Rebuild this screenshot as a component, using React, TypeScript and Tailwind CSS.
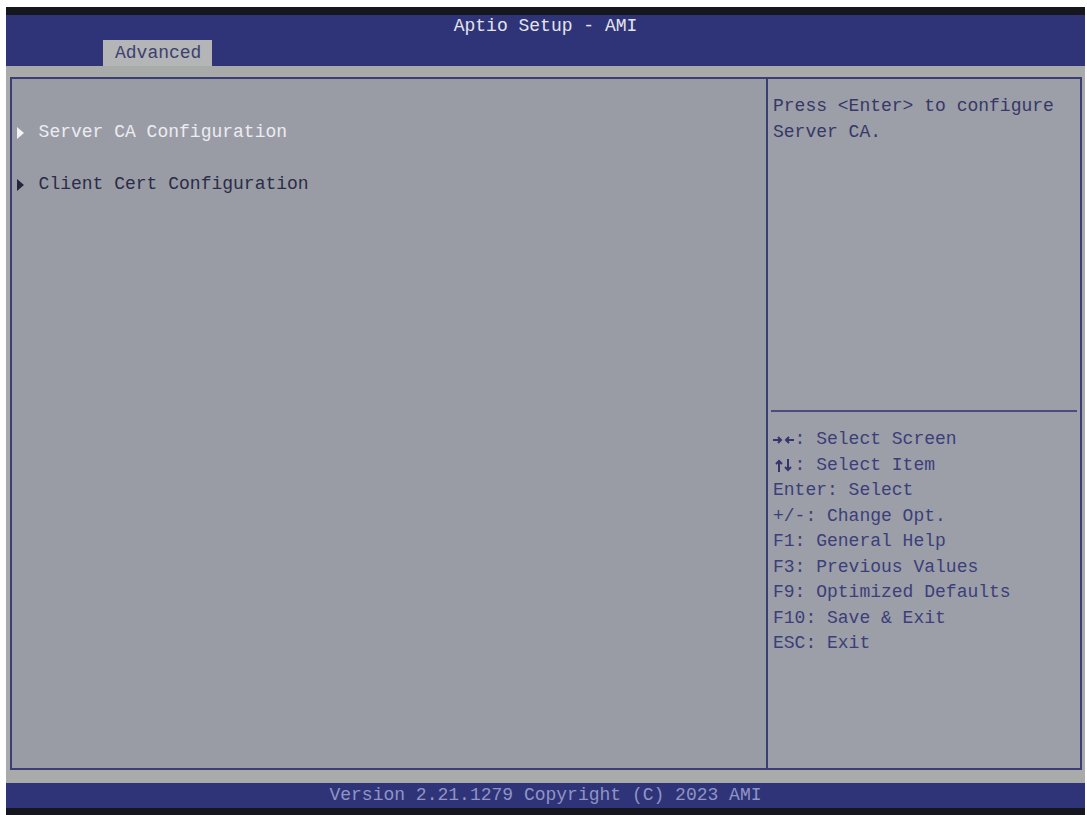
export default function App() {
  const mono = { fontFamily: '"Liberation Mono", "DejaVu Sans Mono", monospace' };

  const help = [
    'Enter: Select',
    '+/-: Change Opt.',
    'F1: General Help',
    'F3: Previous Values',
    'F9: Optimized Defaults',
    'F10: Save & Exit',
    'ESC: Exit',
  ];

  return (
    <div
      className="w-[1087px] h-[815px] bg-white pt-[7px] pl-[6px] pr-[2px] flex flex-col text-[18px] leading-[25.5px]"
      style={mono}
    >
      {/* top black strip */}
      <div className="h-[8px] bg-[#16161f]" />

      {/* header */}
      <div className="h-[51px] bg-[#2f3478] flex flex-col">
        <div className="h-[25px] leading-[23px] text-center text-[#e4e4ee] whitespace-pre">Aptio Setup - AMI</div>
        <div className="flex">
          <div className="ml-[97px] w-[109px] h-[26px] bg-[#b3b5b6] text-[#3d3f70] pl-[12px] leading-[26px] whitespace-pre">
            Advanced
          </div>
        </div>
      </div>

      {/* body */}
      <div className="flex-1 bg-[#a9abab] pt-[11px] pl-[4px] pr-[3px] pb-[13px] flex">
        <div className="flex-1 flex border-2 border-[#3b3d74] bg-[#9a9ca5]">
          {/* left column */}
          <div className="w-[756px] pt-[15px] pl-[5px] border-r-2 border-[#3b3d74]">
            <div className="h-[26px]" />
            <div className="flex items-center h-[26px] text-[#ececf2] whitespace-pre">
              <span className="w-[1ch] flex items-center">
                <svg width="7" height="12" viewBox="0 0 7 12">
                  <path d="M0 0 L7 6 L0 12 Z" fill="#f2f2f6" />
                </svg>
              </span>
              <span> Server CA Configuration</span>
            </div>
            <div className="h-[26px]" />
            <div className="flex items-center h-[26px] text-[#2a2c48] whitespace-pre">
              <span className="w-[1ch] flex items-center">
                <svg width="7" height="12" viewBox="0 0 7 12">
                  <path d="M0 0 L7 6 L0 12 Z" fill="#25263e" />
                </svg>
              </span>
              <span> Client Cert Configuration</span>
            </div>
          </div>

          {/* right column */}
          <div className="flex-1 flex flex-col bg-[#9c9ea8]">
            <div className="h-[331px] pt-[15px] pl-[5px] text-[#363867] whitespace-pre">
              <div>Press &lt;Enter&gt; to configure</div>
              <div>Server CA.</div>
            </div>
            <div className="mx-[3px] h-[2px] bg-[#4a4c7e]" />
            <div className="pt-[15px] pl-[5px] text-[#3b3e7a] whitespace-pre">
              <div className="flex">
                <span className="w-[2ch] flex items-center gap-[1px] text-[#33356c]">
                  <svg width="10" height="10" viewBox="0 0 10 10">
                    <path d="M0 5 H8 M5 2 L8 5 L5 8" stroke="currentColor" strokeWidth="2" fill="none" />
                  </svg>
                  <svg width="10" height="10" viewBox="0 0 10 10">
                    <path d="M10 5 H2 M5 2 L2 5 L5 8" stroke="currentColor" strokeWidth="2" fill="none" />
                  </svg>
                </span>
                <span>: Select Screen</span>
              </div>
              <div className="flex">
                <span className="w-[2ch] flex items-center justify-center gap-[1px] text-[#33356c]">
                  <svg width="8" height="13" viewBox="0 0 8 13">
                    <path d="M4 13 V2 M1 5 L4 2 L7 5" stroke="currentColor" strokeWidth="2" fill="none" />
                  </svg>
                  <svg width="8" height="13" viewBox="0 0 8 13">
                    <path d="M4 0 V11 M1 8 L4 11 L7 8" stroke="currentColor" strokeWidth="2" fill="none" />
                  </svg>
                </span>
                <span>: Select Item</span>
              </div>
              {help.map((h) => (
                <div key={h}>{h}</div>
              ))}
            </div>
          </div>
        </div>
      </div>

      {/* footer */}
      <div className="h-[25px] bg-[#2f3478] text-center leading-[25px] text-[#9094c6] whitespace-pre">
        Version 2.21.1279 Copyright (C) 2023 AMI
      </div>
      <div className="h-[7px] bg-[#16161f]" />
    </div>
  );
}
